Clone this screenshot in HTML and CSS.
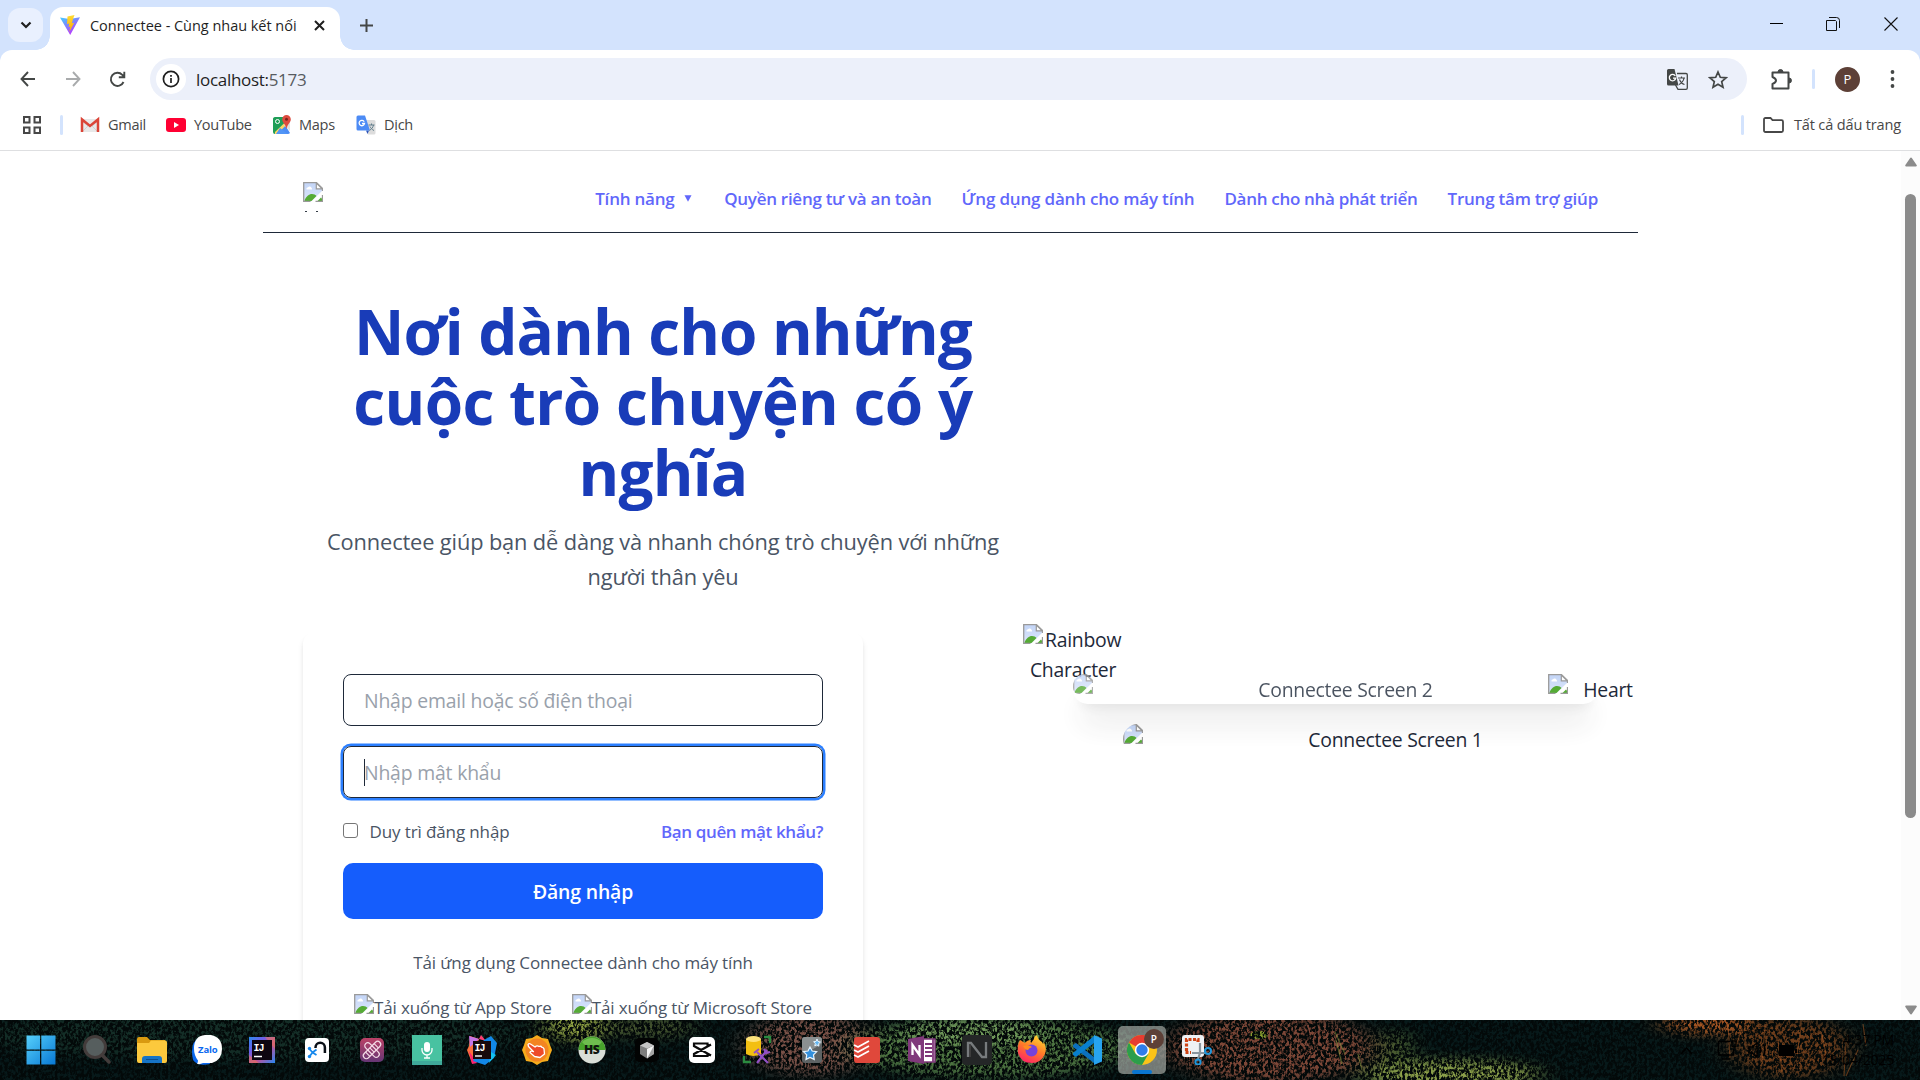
FILE: index.html
```html
<!DOCTYPE html>
<html lang="vi">
<head>
<meta charset="utf-8">
<title>Connectee - Cùng nhau kết nối</title>
<link rel="stylesheet" href="styles.css">
</head>
<body>
<svg class="defs" width="0" height="0" aria-hidden="true">
  <defs>
    <linearGradient id="sky" x1="0" y1="0" x2="0" y2="1"><stop offset="0" stop-color="#c3d5f7"/><stop offset="1" stop-color="#dce6fa"/></linearGradient>
    <symbol id="broken" viewBox="0 0 20 20">
      <path d="M1 1H13.500L19 6.500V9L8 19.500H1Z" fill="url(#sky)"/>
      <path d="M3.500 7.500a1.700 1.700 0 0 1 1.500-2.200a2 2 0 0 1 3.600 .6a1.300 1.300 0 0 1 .4 1.600Z" fill="#fff"/>
      <path d="M1.500 18.500C3 14.500 6 12 9 12c2 0 3.500 .8 4.500 1.900L8.500 19H1.500Z" fill="#55ab35"/>
      <path d="M14.500 19l3.500-3.500l1 1V19Z" fill="#55ab35"/>
      <path d="M19.500 9V6.500L13.500 .7H.7V19.500H7.500M12.500 19.500H19.500V13" fill="none" stroke="#9a9a9a" stroke-width="1.300"/>
      <path d="M13.300 1V6.800H19.200Z" fill="#fff" stroke="#9a9a9a" stroke-width="1.200"/>
    </symbol>
  </defs>
</svg>

<div class="window">
  <header class="tabstrip">
    <button class="tab-search"><svg width="12" height="8" viewBox="0 0 12 8"><path d="M1.500 1.500L6 6l4.500-4.500" fill="none" stroke="#1f1f1f" stroke-width="2.200"/></svg></button>
    <div class="tab">
      <svg width="20" height="20" viewBox="0 0 20 20">
        <defs><linearGradient id="va" x1="0" y1="0" x2=".6" y2="1"><stop offset="0" stop-color="#41d1ff"/><stop offset="1" stop-color="#bd34fe"/></linearGradient><linearGradient id="vb" x1="0" y1="0" x2="0" y2="1"><stop offset="0" stop-color="#ffdd35"/><stop offset="1" stop-color="#ffa800"/></linearGradient></defs>
        <path d="M0 2.500L9.500 4 20 2.300 10.200 20Z" fill="url(#va)"/><path d="M14.500 0L7.500 1.500 7 9l2.200-.4-.6 3.400 1.700-.5-1 5.500L14.200 7.800l-2.300.4L13 4Z" fill="url(#vb)"/>
      </svg>
      <span class="tab-title">Connectee - Cùng nhau kết nối</span>
      <svg class="tab-close" width="11" height="11" viewBox="0 0 11 11"><path d="M1 1l9 9M10 1l-9 9" stroke="#1f1f1f" stroke-width="2"/></svg>
    </div>
    <svg class="new-tab" width="13" height="13" viewBox="0 0 13 13"><path d="M6.500 0v13M0 6.500h13" stroke="#444746" stroke-width="2"/></svg>
    <div class="window-controls">
      <svg width="14" height="14" viewBox="0 0 14 14"><path d="M0 6.500h13" stroke="#000"/></svg>
      <svg width="14" height="14" viewBox="0 0 14 14"><path d="M.5 3.500h9l1 1v9h-10zM3 .5h7.500q3 0 3 3V11" fill="none" stroke="#111"/></svg>
      <svg width="14" height="14" viewBox="0 0 14 14"><path d="M.5 .5l13 13M13.500 .5l-13 13" stroke="#111" stroke-width="1.100"/></svg>
    </div>
  </header>

  <div class="chrome-panel">
    <div class="toolbar">
      <svg width="16" height="16" viewBox="0 0 16 16"><path d="M8 1L1.500 8 8 15M1.500 8H15" fill="none" stroke="#444746" stroke-width="1.900"/></svg>
      <svg width="16" height="16" viewBox="0 0 16 16"><path d="M8 1l6.500 7L8 15M14.500 8H1" fill="none" stroke="#a9abac" stroke-width="1.900"/></svg>
      <svg width="17" height="17" viewBox="0 0 17 17"><path d="M14.500 11A6.600 6.600 0 1 1 13.300 3.800L15 5.600M15.300 .8V6.200H9.800" fill="none" stroke="#444746" stroke-width="1.900"/></svg>
      <div class="omnibox">
        <span class="site-info"><svg width="18" height="18" viewBox="0 0 18 18"><circle cx="9" cy="9" r="7.600" fill="none" stroke="#1f1f1f" stroke-width="1.700"/><path d="M9 8v5M9 5v1.700" stroke="#1f1f1f" stroke-width="1.700"/></svg></span>
        <span class="url">localhost:<span class="port">5173</span></span>
        <svg class="translate" width="21" height="21" viewBox="0 0 21 21"><path d="M10 4.500h9a1.300 1.300 0 0 1 1.300 1.300V19a1.300 1.300 0 0 1-1.300 1.300h-8L8.500 16" fill="none" stroke="#444746" stroke-width="1.300"/><path d="M1.500 0H7.500L11.500 16.500H1.500A1.500 1.500 0 0 1 0 15V1.500A1.500 1.500 0 0 1 1.500 0Z" fill="#444746"/><path d="M8.300 7A3.200 3.200 0 1 0 8.700 9.200H6" fill="none" stroke="#fff" stroke-width="1.300"/><path d="M11 9h7M14.500 7.500V9M17 9c-.5 3-3 5.500-5 6.500M12.500 10.500c.8 2 3 4.500 5 5" fill="none" stroke="#444746" stroke-width="1.200"/></svg>
        <svg class="star" width="20" height="19" viewBox="0 0 20 19"><path d="M10 2l2.300 5.300 5.700.5-4.300 3.800 1.300 5.600-5-3-5 3 1.300-5.600L2 7.800l5.700-.5Z" fill="none" stroke="#444746" stroke-width="1.700"/></svg>
      </div>
      <svg class="extensions" width="22" height="21" viewBox="0 0 22 21"><path d="M2.500 3.500H17.500V19.500H1.500V15Q5 13.500 5 11.500T1.500 8V3.500Z" fill="none" stroke="#444746" stroke-width="2" stroke-linejoin="round"/><path d="M7 3a2.500 2.500 0 0 1 5 0ZM18 9a2.500 2.500 0 0 1 0 5Z" fill="#444746" stroke="#444746"/></svg>
      <i class="divider"></i>
      <span class="avatar">P</span>
      <svg class="kebab" width="5" height="18" viewBox="0 0 5 18"><g fill="#444746"><circle cx="2.500" cy="2" r="1.900"/><circle cx="2.500" cy="9" r="1.900"/><circle cx="2.500" cy="16" r="1.900"/></g></svg>
    </div>
    <div class="bookmarks">
      <svg width="18" height="18" viewBox="0 0 18 18"><path d="M1 1h5.500v5.500H1zM11.500 1H17v5.500h-5.500zM1 11.500h5.500V17H1zM11.500 11.500H17V17h-5.500z" fill="none" stroke="#474747" stroke-width="2"/></svg>
      <i class="divider bm-divider"></i>
      <span class="bookmark gmail"><svg width="20" height="20" viewBox="0 0 20 20"><path d="M1 4h18v13H1z" fill="#e8e8e8"/><path d="M3 7l5 4-5 5M17 7l-5 4 5 5" stroke="#d2d2d2" fill="none"/><path d="M2 17V4.500l8 6.500 8-6.500V17" fill="none" stroke="#db4437" stroke-width="2.500"/></svg><span>Gmail</span></span>
      <span class="bookmark youtube"><svg width="20" height="20" viewBox="0 0 20 20"><rect y="3" width="20" height="14" rx="3" fill="#f03"/><path d="M8 7l5 3-5 3Z" fill="#fff"/></svg><span>YouTube</span></span>
      <span class="bookmark maps"><svg width="20" height="20" viewBox="0 0 20 20"><path d="M1 3.500A2 2 0 0 1 3 2h12v5L4 19H3a2 2 0 0 1-2-2Z" fill="#1f9e57"/><path d="M8 15l5-5 5 8q-1 1-2 1H4Z" fill="#4a8cf5"/><path d="M3 17L14.500 6l2 2L5 19H3Z" fill="#fdd663"/><path d="M8 13l8 6H4Z" fill="#5195f6"/><path d="M12 10l6-5v11Z" fill="#dedede"/><circle cx="5.500" cy="6.500" r="2" fill="none" stroke="#fff"/><path d="M14.500 0a4.300 4.300 0 0 1 4.300 4.300C18.800 7.500 15.500 9 14.500 14 13.500 9 10.200 7.500 10.200 4.300A4.300 4.300 0 0 1 14.500 0Z" fill="#dd4b3e"/><circle cx="14.500" cy="4.300" r="1.500" fill="#7b231e"/></svg><span>Maps</span></span>
      <span class="bookmark dich"><svg width="20" height="20" viewBox="0 0 20 20"><path d="M8 5h10a1.500 1.500 0 0 1 1.500 1.500V18a1.500 1.500 0 0 1-1.500 1.500H12Z" fill="#dcdcdc"/><path d="M10 15.500h3L11.500 19Z" fill="#2c53b8"/><path d="M2 .5H9L14 15.500H2A1.500 1.500 0 0 1 .5 14V2A1.500 1.500 0 0 1 2 .5Z" fill="#4c8bf5"/><path d="M8.200 6.700A2.700 2.700 0 1 0 8.500 8.500H6" fill="none" stroke="#fff" stroke-width="1.300"/><path d="M12.500 10h6M15.500 8.500V10M17.500 10c-.5 2.500-2 4-4 5.500M14 11.500c.5 1.500 2 3 4 4" fill="none" stroke="#607d8b"/></svg><span>Dịch</span></span>
      <span class="all-bookmarks"><i class="divider"></i><svg width="21" height="16" viewBox="0 0 21 16"><path d="M1 13.500V2.500Q1 1 2.500 1H7.500L9.500 3.200H18.500Q20 3.200 20 4.700V13.500Q20 15 18.500 15H2.500Q1 15 1 13.500Z" fill="none" stroke="#474747" stroke-width="1.800"/></svg><span>Tất cả dấu trang</span></span>
    </div>
  </div>

  <div class="viewport">
    <div class="page">
      <header class="site-header">
        <div class="logo"><svg width="20" height="20"><use href="#broken"/></svg><i></i><i></i></div>
        <nav class="nav">
          <a class="n1">Tính năng <svg width="8" height="7" viewBox="0 0 8 7"><path d="M.5 .3h7L4 6.700Z" fill="#6167fb"/></svg></a>
          <a class="n2">Quyền riêng tư và an toàn</a>
          <a class="n3">Ứng dụng dành cho máy tính</a>
          <a class="n4">Dành cho nhà phát triển</a>
          <a class="n5">Trung tâm trợ giúp</a>
        </nav>
      </header>
      <main class="hero">
        <section class="hero-copy">
          <h1><span class="l1">Nơi dành cho những</span><br><span class="l2">cuộc trò chuyện có ý</span><br><span class="l3">nghĩa</span></h1>
          <p class="lead">Connectee giúp bạn dễ dàng và nhanh chóng trò chuyện với những<br>người thân yêu</p>
          <form class="card">
            <input class="field" type="text" placeholder="Nhập email hoặc số điện thoại">
            <div class="focused"><input class="field" type="text" placeholder="Nhập mật khẩu"><i class="caret"></i></div>
            <div class="row"><label class="remember"><i class="checkbox"></i>Duy trì đăng nhập</label><a class="forgot">Bạn quên mật khẩu?</a></div>
            <button class="submit" type="button">Đăng nhập</button>
            <p class="download">Tải ứng dụng Connectee dành cho máy tính</p>
            <div class="stores">
              <span class="store"><svg width="20" height="20"><use href="#broken"/></svg>Tải xuống từ App Store</span>
              <span class="store"><svg width="20" height="20"><use href="#broken"/></svg>Tải xuống từ Microsoft Store</span>
            </div>
          </form>
        </section>
        <section class="hero-art">
          <div class="rainbow"><svg width="20" height="20"><use href="#broken"/></svg><span>Rainbow</span><span class="second">Character</span></div>
          <div class="screen one"><svg width="20" height="20"><use href="#broken"/></svg><span>Connectee Screen 1</span></div>
          <div class="screen two"><svg width="20" height="20"><use href="#broken"/></svg><span>Connectee Screen 2</span></div>
          <div class="heart"><svg width="20" height="20"><use href="#broken"/></svg><span>Heart</span></div>
        </section>
      </main>
    </div>
    <div class="scrollbar">
      <svg width="12" height="10" viewBox="0 0 12 10"><path d="M6 1.500L10.800 8.500H1.200Z" fill="#8b8b8b" stroke="#8b8b8b" stroke-width="2" stroke-linejoin="round"/></svg>
      <i class="thumb"></i>
      <svg width="12" height="10" viewBox="0 0 12 10"><path d="M6 8.500L10.800 1.500H1.200Z" fill="#8b8b8b" stroke="#8b8b8b" stroke-width="2" stroke-linejoin="round"/></svg>
    </div>
  </div>

  <footer class="taskbar">
    <svg class="meadow" width="1920" height="60" viewBox="0 0 1920 60" preserveAspectRatio="none">
      <defs>
        <filter id="grass" x="0" y="0" width="100%" height="100%" color-interpolation-filters="sRGB"><feTurbulence type="fractalNoise" baseFrequency=".38 .26" numOctaves="4" seed="11"/><feColorMatrix values="0 0 0 0 .01  0 0 0 0 .035  0 0 0 0 .035  4 2.500 0 0 -2.600"/></filter>
        <filter id="soft" x="-20%" y="-60%" width="140%" height="220%" color-interpolation-filters="sRGB"><feGaussianBlur stdDeviation="14 6"/></filter>
      </defs>
      <rect width="1920" height="60" fill="#07191a"/>
      <g filter="url(#soft)">
        <ellipse cx="250" cy="15" rx="280" ry="25" fill="#142e27"/>
        <ellipse cx="575" cy="6" rx="30" ry="16" fill="#97a844"/>
        <ellipse cx="650" cy="8" rx="45" ry="10" fill="#4a5930"/>
        <ellipse cx="810" cy="25" rx="65" ry="30" fill="#7a5147"/>
        <ellipse cx="990" cy="28" rx="140" ry="30" fill="#4c7340"/>
        <ellipse cx="970" cy="12" rx="75" ry="14" fill="#70995a"/>
        <ellipse cx="1270" cy="28" rx="105" ry="35" fill="#7d4737"/>
        <ellipse cx="1450" cy="54" rx="90" ry="14" fill="#8ba04a"/>
        <ellipse cx="1395" cy="30" rx="12" ry="20" fill="#667d3a"/>
        <ellipse cx="1710" cy="4" rx="50" ry="10" fill="#b35a23"/>
        <ellipse cx="1790" cy="28" rx="60" ry="30" fill="#6e3d1b"/>
      </g>
      <ellipse cx="1259" cy="15" rx="9" ry="4" fill="#8aa02f"/>
      <rect width="1920" height="60" filter="url(#grass)"/>
      <g fill="none" stroke-width="1.200" opacity=".45">
        <path d="M1335 12l10 22M1342 44l-6-24M1362 50l-4-16M1380 56l6-20M1402 58l-2-20M1425 58l8-18M1450 58l-3-16M1470 58l5-12" stroke="#9db04a"/>
        <path d="M1698 2l-4 12M1712 0l-8 16M1728 4l2 34M1742 8l-6 18M1765 6l-3 38M1778 20l4 32M1801 8l-4 26M1822 14l4 20M1846 22l-2 34M1858 30l-12 26M1863 4l3 22" stroke="#c4682a"/>
      </g>
    </svg>
    <div class="apps">
      <span class="app start"><svg viewBox="0 0 30 30"><defs><linearGradient id="win" x1="0" y1="0" x2="1" y2="1"><stop offset="0" stop-color="#56d0fb"/><stop offset="1" stop-color="#0878d4"/></linearGradient></defs><path d="M.5 .5H14v14H.5zM15.300 .5H29.500v14H15.300zM.5 15.800H14V29.500H.5zM15.300 15.800H29.500V29.500H15.300z" fill="url(#win)"/></svg></span>
      <span class="app"><svg viewBox="0 0 30 30"><circle cx="13" cy="12" r="10.500" fill="#565e5e" stroke="#433c3b" stroke-width="3"/><path d="M20 20l7 7" stroke="#433c3b" stroke-width="3.500" stroke-linecap="round"/></svg></span>
      <span class="app"><svg viewBox="0 0 30 30"><path d="M0 4q0-2 2-2h8l3 3h15l1 3H0z" fill="#d99a10"/><path d="M0 8h12l2-2.500H28q2 0 2 2V26q0 2-2 2H2q-2 0-2-2z" fill="#fcc93d"/><path d="M5 28v-4q0-3 3-3h14q3 0 3 3v4z" fill="#1674c6"/><path d="M9 24.500h12" stroke="#0d4e8f"/></svg></span>
      <span class="app"><svg viewBox="0 0 30 30"><path d="M8 2Q0 6 0 16t3 11Q7 31 18 29Z" fill="#0b68ef"/><path d="M13 0h6q11 2 11 14 0 11-10 14H11q-4 2-6 .5 1-1 1-3-4-5-4-12Q2 1 13 0Z" fill="#fff"/><text x="6" y="17.500" class="zalo">Zalo</text></svg></span>
      <span class="app"><svg viewBox="0 0 30 30"><defs><linearGradient id="ij" x1="0" y1="0" x2="1" y2="1"><stop offset="0" stop-color="#2b8cf0"/><stop offset=".3" stop-color="#6d5fe8"/><stop offset=".6" stop-color="#c05097"/><stop offset="1" stop-color="#2788f4"/></linearGradient></defs><path d="M2 2h26v26H2z" fill="url(#ij)"/><path d="M2 20V28H12zM18 2H28V14z" fill="#f27a45" opacity=".5"/><path d="M5 5h20v20H5z" fill="#0d0610"/><text x="6.500" y="15.500" class="ij">IJ</text><path d="M7 21.500h8" stroke="#fff" stroke-width="1.500"/></svg></span>
      <span class="app"><svg viewBox="0 0 30 30"><rect x="3" y="3" width="24" height="24" rx="4" fill="#fff"/><path d="M13.500 13V12.500a4.700 4.700 0 0 1 9.400 0V18" fill="none" stroke="#0a0f16" stroke-width="2.500"/><path d="M7.500 14l3 3.500-3 4M10.500 17.500l4-3M10.500 17.500l4 2.500" stroke="#1688ed" stroke-width="1.800" fill="none"/><g fill="#1688ed"><circle cx="7.500" cy="13.500" r="1.700"/><circle cx="7.500" cy="21.500" r="1.700"/></g></svg></span>
      <span class="app"><svg viewBox="0 0 30 30"><defs><linearGradient id="plum" x1="0" y1="0" x2="0" y2="1"><stop offset="0" stop-color="#bb4166"/><stop offset="1" stop-color="#653675"/></linearGradient></defs><rect x="3" y="3" width="24" height="24" rx="5" fill="url(#plum)"/><g transform="rotate(-45 15 15)" fill="none" stroke="#f4dbe7" stroke-width="1.200"><rect x="4" y="12" width="22" height="6" rx="3"/><path d="M9 12v6M12 12v6M15 12v6M18 12v6M21 12v6"/><path d="M12 12V9a3 3 0 0 1 6 0v3M12 18v3a3 3 0 0 0 6 0v-3"/></g></svg></span>
      <span class="app"><svg viewBox="0 0 30 30"><path d="M0 0h30v30H0z" fill="#48c2a1"/><path d="M0 26h30v4H0z" fill="#3fa99a"/><rect x="12" y="7" width="6" height="10" rx="3" fill="#fff"/><path d="M10 13v2a5 5 0 0 0 10 0v-2M15 20v3M12 23h6" fill="none" stroke="#fff" stroke-width="1.300"/></svg></span>
      <span class="app"><svg viewBox="0 0 30 30"><path d="M3 1l9 3L5 28 0 15l2-4Z" fill="#fa6f3d"/><path d="M2 1l10 3-9 8Z" fill="#c477e8"/><path d="M2 16l8 12-5 1Z" fill="#ff206e"/><path d="M12 4l2-4 5 6Z" fill="#ff3d73"/><path d="M17 5l7-4 6 7-3 15-9 7-12-4Z" fill="#1288e8"/><path d="M22 28l7-8-5-3Z" fill="#13c1f1"/><path d="M6 6h18v18H6z" fill="#160a0d"/><text x="7.500" y="15.500" class="ij">IJ</text><path d="M8 21h7" stroke="#fff" stroke-width="1.400"/></svg></span>
      <span class="app"><svg viewBox="0 0 30 30"><path d="M15 0l5 3 6 1 2 6 2 5-2 5-2 6-6 1-5 3-5-3-6-1-2-6-2-5 2-5 2-6 6-1Z" fill="#f7ac1c"/><circle cx="15" cy="15" r="11.500" fill="#f38422"/><path d="M6 9.500q1-1.500 2.500-.5L13 12q2-2 4-.5 2-.8 3 .8 1.500 0 2 1.700l.5 5-4.500 3.500-5.500-1-4.500-4q0-1.500 2-1.300l1.500.5L6.500 11.500Z" fill="#ee4a29" stroke="#fff" stroke-width="1.300" stroke-linejoin="round"/></svg></span>
      <span class="app"><svg viewBox="0 0 30 30"><circle cx="15" cy="15" r="13.500" fill="#d9ded7"/><path d="M1.500 15a13.500 13.500 0 0 1 27 0Z" fill="#48a32c"/><path d="M5 7q10-8 20 0l-3 3H8Z" fill="#8bcf67" opacity=".6"/><text x="7" y="19" class="hs">HS</text></svg></span>
      <span class="app"><svg viewBox="0 0 30 30"><rect x="3" y="3" width="24" height="24" rx="5" fill="#020303"/><path d="M15 7l7 3.500v8.500l-7 4.500-7-4.500v-8.500Z" fill="#7d7d7d"/><path d="M15 7l7 3.500-7 3-7-3Z" fill="#c4c4c4"/><path d="M22 10.500V19l-7 4.500V14Z" fill="#a5a5a5"/><path d="M22 10.500L15 23.500V14Z" fill="#f4f4f4"/></svg></span>
      <span class="app"><svg viewBox="0 0 30 30"><rect x="2" y="2" width="26" height="26" rx="5" fill="#fff"/><path d="M24 9.500L7 19v2h13.500v-3M24 20.500L7 11V8.500h13.500V12" fill="none" stroke="#0b0b0b" stroke-width="2.200"/></svg></span>
      <span class="app"><svg viewBox="0 0 30 30"><path d="M4 4v15q7 4 15 0V4z" fill="#f3bf12"/><ellipse cx="11.500" cy="4" rx="7.500" ry="3" fill="#ffe27a"/><path d="M22 2h6v6M2 21v6h7" fill="none" stroke="#2b8b40" stroke-width="2.300"/><path d="M15 28L25 15M15 17l11 11" stroke="#9250c4" stroke-width="2.200"/><path d="M12 18l5-4M22 14l2 4 4-1" fill="none" stroke="#9250c4" stroke-width="2"/></svg></span>
      <span class="app"><svg viewBox="0 0 30 30"><rect x="5" y="2" width="20" height="26" rx="3" fill="#5e6364"/><path d="M5 17Q18 15 25 8V5q0-3-3-3H8Q5 2 5 5Z" fill="#8b9091"/><path d="M13 12l2.200 4 4.500.7-3.200 3.200.7 4.500-4.200-2-4 2 .7-4.500L6.500 16.700l4.500-.7Z" fill="#3390dc" stroke="#e7f5ff" stroke-width="1.200"/><path d="M20 4l1 2.500 2.500.5-2 1.700.5 2.500-2.200-1.300-2 1 .5-2.400-1.700-1.800 2.400-.2Z" fill="#63b5ef" stroke="#e7f5ff"/></svg></span>
      <span class="app"><svg viewBox="0 0 30 30"><rect x="2" y="2" width="26" height="26" rx="3" fill="#e0483b"/><g fill="none" stroke="#fff" stroke-width="1.800"><path d="M2 10l4 2L17 6M2 15l4 2 11-6M2 20l4 2 11-6"/></g></svg></span>
      <span class="app"><svg viewBox="0 0 30 30"><path d="M15 4h13v23H15z" fill="#fff" stroke="#80397b" stroke-width="1.500"/><path d="M18 9h7M18 13h7M18 17h7M18 21h7M26 4v23" stroke="#80397b" stroke-width="1.800"/><path d="M1 4l16-3v28L1 26Z" fill="#80397b"/><path d="M5.500 20V10l7 10V10" fill="none" stroke="#fff" stroke-width="2.300"/></svg></span>
      <span class="app"><svg viewBox="0 0 30 30"><rect width="30" height="30" rx="4" fill="#242627"/><path d="M6 22V8h3l11 14h4V7" fill="none" stroke="#777b7d" stroke-width="2.300"/><path d="M8 22V10" stroke="#444" stroke-width="1.500"/></svg></span>
      <span class="app"><svg viewBox="0 0 30 30"><defs><linearGradient id="ff" x1=".8" y1="0" x2=".3" y2="1"><stop offset="0" stop-color="#ffdf32"/><stop offset=".5" stop-color="#ff7c28"/><stop offset="1" stop-color="#ff2466"/></linearGradient></defs><path d="M3 5l5 3q2-3 6-3-1 2 0 3l3-4q0-3 3-4 1 5 5 7l1 2 1-2q3 7 1 12-4 9-13 9Q4 28 1 18 0 10 3 5Z" fill="url(#ff)"/><circle cx="14.500" cy="15.500" r="6" fill="#7542da"/><path d="M6 11q6-2 9 1-3 1-4 3-3 0-5-4Z" fill="#ff8b20"/></svg></span>
      <span class="app"><svg viewBox="0 0 30 30"><path d="M1 10l3-2 18 14v6L1 12Z" fill="#0b70bc"/><path d="M1 20l3 2L22 8V1L1 18Z" fill="#087fce"/><path d="M22 0l8 3.500v23L22 30Z" fill="#27a4ef"/></svg></span>
      <span class="app active"><svg viewBox="0 0 30 30"><circle cx="15" cy="15" r="15" fill="#fbc318"/><path d="M15 15L2 7.500A15 15 0 0 1 28 7.500Z" fill="#e63d31"/><path d="M2 7.500A15 15 0 0 0 15 30L21.500 18.700 8.500 18.700Z" fill="#2c9e4b"/><circle cx="15" cy="15" r="7.200" fill="#fff"/><circle cx="15" cy="15" r="5.700" fill="#2f7de9"/></svg><b class="badge">P</b><i class="running"></i></span>
      <span class="app"><svg viewBox="0 0 30 30"><rect width="22" height="22" rx="3" fill="#eef1f4"/><path d="M4.500 16V4.500H16V8" fill="none" stroke="#cf4315" stroke-width="3.200" stroke-dasharray="3 1.500"/><path d="M5 16v1.500h4" fill="none" stroke="#cf4315" stroke-width="3" stroke-dasharray="3 1.500"/><path d="M18 8v10l-2 6M10 18h13" fill="none" stroke="#8a969f" stroke-width="2.200"/><circle cx="26" cy="16" r="3" fill="none" stroke="#2196d9" stroke-width="2"/><circle cx="16" cy="27" r="2.600" fill="none" stroke="#2196d9" stroke-width="2"/></svg></span>
    </div>
    <div class="tray">
      <svg width="13" height="9" viewBox="0 0 13 9"><path d="M1 8l5.500-6L12 8" fill="none" stroke="#000" stroke-width="1.600"/></svg>
      <svg class="display" width="21" height="20" viewBox="0 0 21 20"><path d="M13 1.500H1.500V15h15V9M5 19h8M15 1h4v5q-2 2-4 0Z" fill="none" stroke="#000" stroke-width="1.400"/></svg>
      <svg width="20" height="18" viewBox="0 0 20 18"><path d="M1 6h3l5-4v14l-5-4H1ZM12 6q2 3 0 6M15 3q4 6 0 12" fill="none" stroke="#000" stroke-width="1.400"/></svg>
      <svg width="19" height="13" viewBox="0 0 19 13"><path d="M2 2h13v9H2z" fill="#000" stroke="#000" stroke-width="2"/><path d="M18 5v4" stroke="#000" stroke-width="2"/></svg>
      <div class="clock"><span>4:37 PM</span><span>18/04/2025</span></div>
    </div>
  </footer>
</div>
</body>
</html>
```
FILE: styles.css
```css
* { box-sizing: border-box; }
body { margin: 0; font-family: "Open Sans", "Noto Sans", sans-serif; color: #1e2939; background: #fff; overflow: hidden; }
i, b { font-style: normal; display: block; }
svg { display: block; flex: none; }
.defs { position: absolute; }
.window { width: 1920px; height: 1080px; display: flex; flex-direction: column; background: #d3e3fd; }

.tabstrip { height: 50px; display: flex; align-items: flex-start; padding-left: 8px; flex: none; }
.tab-search { width: 35px; height: 34px; margin-top: 8px; border: 0; border-radius: 12px; background: #e9f0fe; display: flex; align-items: center; justify-content: center; padding: 0; }
.tab { position: relative; width: 290px; height: 43px; margin: 7px 0 0 7px; padding: 0 15px 7px 10px; background: #fff; border-radius: 13px 13px 0 0; display: flex; align-items: center; }
.tab::before, .tab::after { content: ""; position: absolute; bottom: 0; width: 14px; height: 14px; }
.tab::before { left: -14px; background: radial-gradient(circle at 0 0, transparent 13.500px, #fff 14px); }
.tab::after { right: -14px; background: radial-gradient(circle at 100% 0, transparent 13.500px, #fff 14px); }
.tab-title { margin-left: 10px; font-size: 14.500px; letter-spacing: -.03px; color: #1f1f1f; white-space: nowrap; }
.tab-close { margin-left: auto; }
.new-tab { margin: 19px 0 0 20px; }
.window-controls { margin: 17px 22px 0 auto; display: flex; gap: 42px; }
.window-controls svg:nth-child(2) { margin-right: 2px; }

.chrome-panel { height: 101px; flex: none; background: #fff; border-radius: 12px 12px 0 0; border-bottom: 1px solid #dedfe1; }
.toolbar { height: 58px; display: flex; align-items: center; padding-left: 20px; }
.toolbar > svg:nth-child(2) { margin-left: 29px; }
.toolbar > svg:nth-child(3) { margin: 0 1px 0 28px; }
.omnibox { width: 1597px; height: 42px; margin-left: 23px; border-radius: 21px; background: #ecf0fa; display: flex; align-items: center; padding: 0 19px 0 6px; }
.site-info { width: 30px; height: 30px; border-radius: 50%; background: #fff; display: flex; align-items: center; justify-content: center; }
.url { margin-left: 10px; font-size: 17px; letter-spacing: -.3px; color: #1f1f1f; }
.port { color: #575b5f; }
.translate { margin-left: auto; }
.star { margin-left: 20px; }
.extensions { margin-left: 24px; }
.divider { width: 3px; height: 20px; border-radius: 2px; background: #d3e3fd; }
.toolbar .divider { margin-left: 19px; }
.avatar { width: 25px; height: 25px; margin-left: 20px; border-radius: 50%; background: #5d4037; color: #fff; font-size: 13px; line-height: 25px; text-align: center; }
.kebab { margin-left: 30px; }
.bookmarks { height: 34px; display: flex; align-items: center; padding-left: 23px; font-size: 14.550px; letter-spacing: -.3px; color: #474747; white-space: nowrap; }
.bookmarks span > span { margin-top: -2px; }
.bm-divider { margin-left: 19px; }
.bookmark { display: flex; align-items: center; gap: 8px; }
.gmail { margin-left: 17px; width: 86px; }
.youtube { width: 106px; }
.maps { width: 84px; gap: 7px; }
.all-bookmarks { margin: 0 19px 0 auto; display: flex; align-items: center; letter-spacing: -.16px; }
.all-bookmarks svg { margin: 0 10px 0 19px; }

.viewport { height: 869px; flex: none; display: flex; background: #fff; overflow: hidden; }
.page { width: 1901px; padding: 0 263px; }
.site-header { width: 1375px; height: 82px; padding: 31px 40px 20px; border-bottom: 1px solid #1e2939; display: flex; justify-content: space-between; }
.logo { width: 20px; height: 30px; display: flex; flex-wrap: wrap; gap: 0 7px; overflow: hidden; }
.logo i { width: 2px; height: 1px; margin: 9px 0 0 2px; background: #333b45; }
.nav { display: flex; gap: 30px; height: 31px; line-height: 33px; font-size: 17px; font-weight: 600; color: #6167fb; white-space: nowrap; }
.n1 { display: flex; align-items: center; gap: 9px; letter-spacing: -.22px; width: 99px; height: 33px; }
.n2 { letter-spacing: -.28px; }
.n3 { letter-spacing: -.19px; }
.n4 { letter-spacing: -.3px; }
.n5 { letter-spacing: -.23px; }

.hero { display: flex; width: 1375px; padding: 63px 0 0 40px; }
.hero-copy { width: 720px; text-align: center; }
h1 { margin: 0; font-size: 62px; line-height: 70.400px; font-weight: 700; color: #193cb8; white-space: nowrap; }
.l1 { letter-spacing: -.85px; }
.l2 { letter-spacing: -.65px; }
.l3 { letter-spacing: -.8px; }
.lead { margin: 17px 0 0; font-size: 21.820px; line-height: 35px; letter-spacing: -.14px; color: #4a5565; white-space: nowrap; }
.card { width: 560px; height: 480px; margin: 39px 0 0; padding: 41px 40px 0; border-radius: 10px; background: #fff; box-shadow: 0 5px 7.500px -1px rgba(0,0,0,.1), 0 2.500px 5px -2.500px rgba(0,0,0,.1); display: flex; flex-direction: column; }
.field { display: block; width: 480px; height: 52px; padding: 0 20px; border: 1px solid #1e2939; border-radius: 8px; background: #fff; outline: 0; font: 19.400px "Open Sans", "Noto Sans", sans-serif; letter-spacing: -.19px; }
.field::placeholder { color: #99a1ab; opacity: 1; }
.focused { position: relative; margin-top: 20px; border-radius: 8px; box-shadow: 0 0 0 2.500px #2b7fff; }
.caret { position: absolute; left: 21px; top: 13px; width: 1px; height: 27px; background: #1e2939; }
.row { height: 24px; margin-top: 21px; display: flex; align-items: center; justify-content: space-between; font-size: 17px; color: #4a5565; }
.remember { display: flex; align-items: center; gap: 11.500px; letter-spacing: -.12px; }
.checkbox { width: 15px; height: 15px; margin-top: -2px; border: 1px solid #767676; border-radius: 3px; }
.forgot { font-weight: 600; letter-spacing: -.38px; color: #6167fb; }
.submit { width: 480px; height: 56px; margin-top: 20px; padding: 1px 0 0; border: 0; border-radius: 10px; background: #155dfc; color: #fff; font: 600 19.400px "Open Sans", sans-serif; letter-spacing: -.15px; flex: none; }
.download { margin: 32px 0 0; font-size: 17px; line-height: 24px; letter-spacing: -.12px; color: #4a5565; }
.stores { display: flex; justify-content: center; gap: 20px; margin-top: 19px; font-size: 17px; line-height: 27px; letter-spacing: -.15px; color: #4a5565; white-space: nowrap; }
.store { display: flex; }

.hero-art { position: relative; width: 615px; font-size: 19.400px; line-height: 30px; letter-spacing: -.27px; text-align: center; white-space: nowrap; }
.rainbow, .screen, .heart { position: absolute; display: flex; }
.rainbow { left: 0; top: 328px; width: 100px; flex-wrap: wrap; }
.rainbow span { margin: 1px 0 0 2px; }
.rainbow .second { width: 100px; margin: 0; }
.screen { width: 525px; height: 30px; border-radius: 15px; overflow: hidden; }
.screen span { flex: 1; padding-top: 1px; }
.screen.one { left: 100px; top: 428px; }
.screen.two { left: 50px; top: 378px; overflow: visible; opacity: .8; box-shadow: 0 25px 31px -6px rgba(0,0,0,.13), 0 10px 12.500px -7.500px rgba(0,0,0,.12); }
.screen.two svg { border-radius: 12px 0 0 6px; }
.heart { left: 525px; top: 378px; width: 90px; }
.heart span { flex: 1; padding: 1px 0 0 10px; }

.scrollbar { width: 19px; background: #fcfcfc; display: flex; flex-direction: column; align-items: center; padding: 6px 0 5px; }
.thumb { width: 11px; height: 624px; margin: 27px 0 auto; border-radius: 6px; background: #8b8b8b; }

.taskbar { position: relative; height: 60px; flex: none; display: flex; justify-content: space-between; overflow: hidden; background: #08191a; }
.meadow { position: absolute; inset: 0; }
.apps { position: relative; display: flex; align-items: center; padding-left: 14.500px; }
.app { width: 55px; height: 60px; display: flex; align-items: center; justify-content: center; }
.start { padding-right: 3px; }
.app svg { width: 30px; height: 30px; }
.app text { font-family: "Open Sans", sans-serif; }
.zalo { font-size: 9.500px; font-weight: 700; fill: #0b68ef; letter-spacing: -.1px; }
.app .ij { font: 700 10px "Liberation Mono", monospace; fill: #fff; letter-spacing: -1px; }
.hs { font-size: 12px; font-weight: 800; fill: #10150f; letter-spacing: -.5px; }
.active { position: relative; width: 47.500px; height: 48px; margin: 0 3.750px; border-radius: 5px; background: rgba(190,195,188,.6); }
.badge { position: absolute; right: 2px; top: 3px; width: 20px; height: 20px; border-radius: 50%; background: #5d4037; color: #fff; font-size: 10px; line-height: 20px; text-align: center; font-weight: 600; }
.running { position: absolute; left: 14px; bottom: 0; width: 20px; height: 4px; border-radius: 2px; background: #0a76d0; }
.tray { position: relative; display: flex; align-items: center; gap: 10px; padding-right: 26px; color: #000; }
.tray .display { margin-left: 14px; }
.clock { display: flex; flex-direction: column; align-items: flex-end; margin-left: 15px; font-size: 14px; line-height: 20px; letter-spacing: -.2px; }
```
